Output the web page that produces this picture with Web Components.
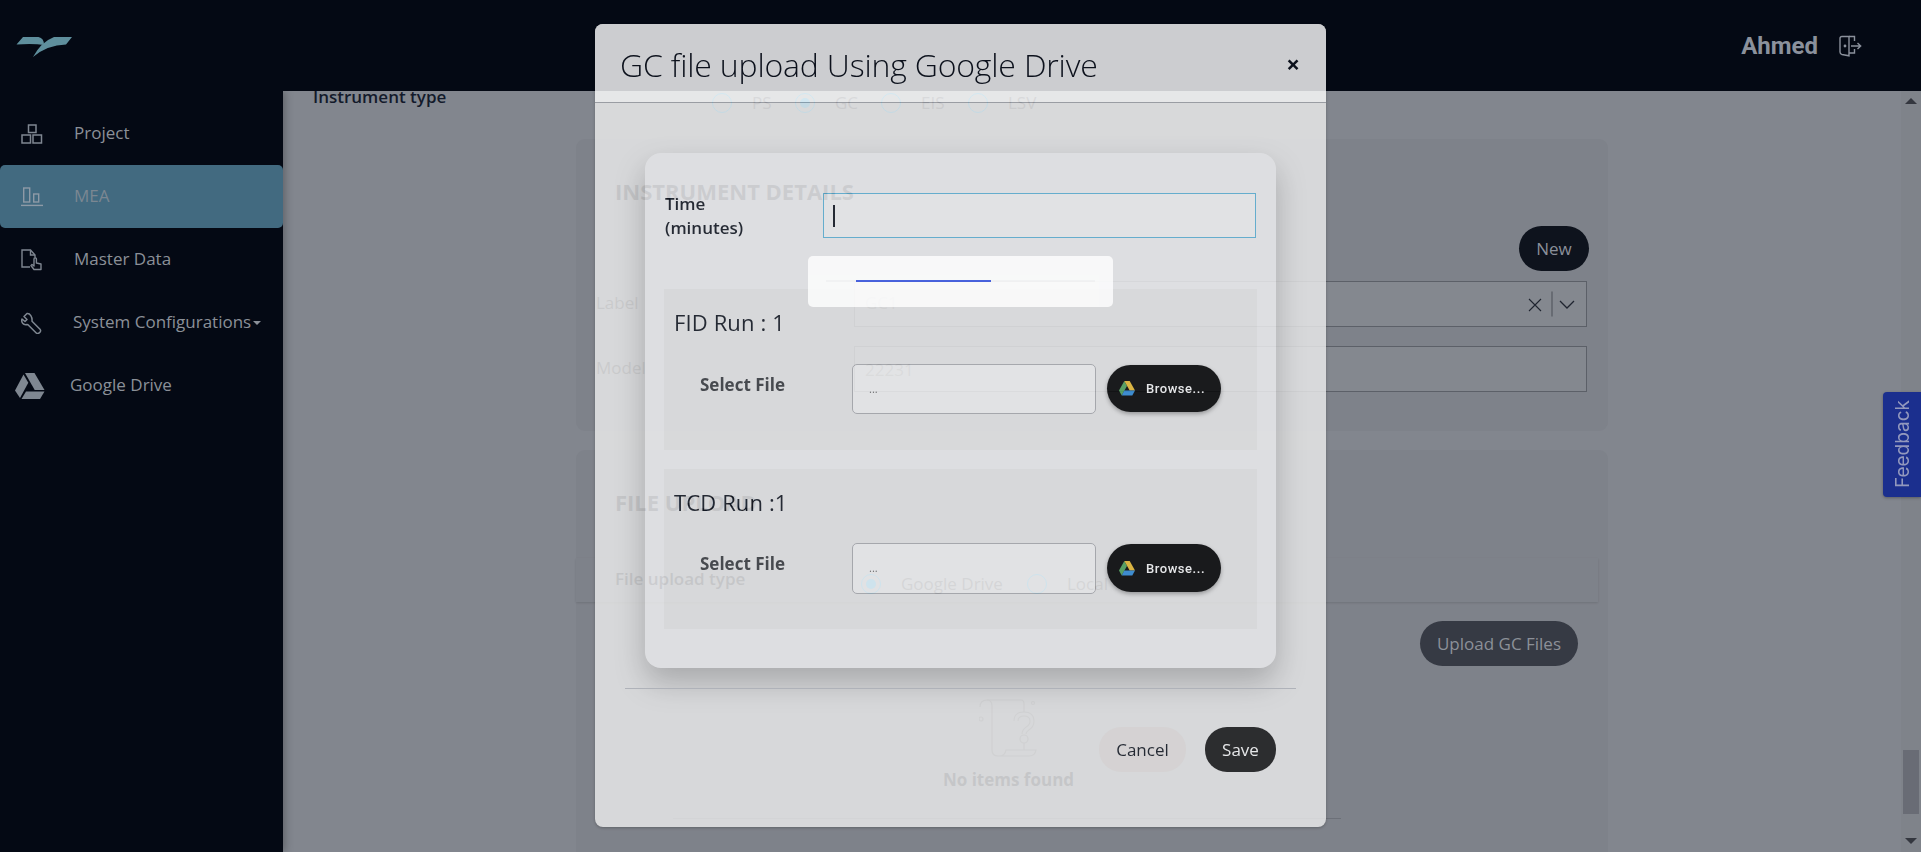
<!DOCTYPE html>
<html>
<head>
<meta charset="utf-8">
<title>GC file upload</title>
<style>
  html, body { margin:0; height:100%; overflow:hidden; background:#82868e; font-family:'Open Sans',sans-serif; }
</style>
</head>
<body>
<app-shell>
  <top-bar slot="top" user="Ahmed"></top-bar>
  <side-nav slot="side">
    <nav-item label="Project">
      <svg slot="icon" width="22" height="20" viewBox="0 0 22 20" fill="none" stroke="currentColor" stroke-width="1.5"><rect x="7.5" y="1" width="7.5" height="7.5"/><rect x="1" y="11" width="8.5" height="8"/><rect x="12" y="11" width="8.5" height="8"/></svg>
    </nav-item>
    <nav-item label="MEA" active>
      <svg slot="icon" width="22" height="20" viewBox="0 0 22 20" fill="none" stroke="currentColor" stroke-width="1.4"><rect x="2.7" y="1" width="6" height="14"/><rect x="12.7" y="7" width="5" height="8"/><path d="M0 18.4h22"/></svg>
    </nav-item>
    <nav-item label="Master Data">
      <svg slot="icon" width="22" height="22" viewBox="0 0 22 22" fill="none" stroke="currentColor" stroke-width="1.4"><path d="M9 18H1V1h8.5l4.5 5v2"/><path d="M9.5 1.5V6h4.5" /><path d="M13 20.5l-3-4 1-1 2 1.5V10a1.2 1.2 0 0 1 2.4 0v4l4.6 1v5.5z" stroke-linejoin="round"/></svg>
    </nav-item>
    <nav-item label="System Configurations" caret style="--label-x:73px">
      <svg slot="icon" width="22" height="22" viewBox="0 0 22 22" fill="none" stroke="currentColor" stroke-width="1.5" stroke-linejoin="round"><path d="M6 1.5L3 4.5l3 3-2 2L1 7C0 10 2 13.5 6 12.5l1 .2 8 8c1 1 2.2 1 3.5 0s1.500-2.500.5-3.500l-8-8C11.500 5 9 1 6 1.500z"/></svg>
    </nav-item>
    <nav-item label="Google Drive" style="--label-x:70px;--icon-x:15px">
      <svg slot="icon" width="30" height="26" viewBox="0 0 30 26" fill="currentColor"><path d="M10 0h9.500l10 17h-9.800z"/><path d="M8.500 1.500l4.800 8.300L5 25 0 17.500z"/><path d="M11 18.500h18.500L25 26H6.500z"/></svg>
    </nav-item>
  </side-nav>
  <mea-page slot="main"></mea-page>
  <fake-scrollbar slot="scroll"></fake-scrollbar>
</app-shell>

<feedback-tab>Feedback</feedback-tab>

<upload-modal heading="GC file upload Using Google Drive">
  <run-panel heading="FID Run : 1"></run-panel>
  <run-panel heading="TCD Run :1" style="--row-gap:25px;--field-h:51px;--browse-h:48px;--panel-h:160px;margin-top:19px"></run-panel>
</upload-modal>

<progress-box></progress-box>

<script>
  const DRIVE_ICON = `<svg width="16" height="15" viewBox="0 0 16 15"><path d="M5.300 0L0 9.500l2.700 5L8 5z" fill="#4ea75a"/><path d="M5.300 0h5.400L16 9.500h-5.300z" fill="#f0c030"/><path d="M2.700 14.500h10.600L16 9.500H5.300z" fill="#2f8fe0"/></svg>`;

  class AppShell extends HTMLElement {
    connectedCallback() {
      this.attachShadow({ mode: 'open' }).innerHTML = `
        <style>
          :host { display:grid; grid-template-columns:283px 1fr 20px; grid-template-rows:91px 761px; width:1921px; height:852px; overflow:hidden; }
          ::slotted([slot=top]) { grid-column:1 / -1; grid-row:1; }
          ::slotted([slot=side]) { grid-column:1; grid-row:2; z-index:1; }
          ::slotted([slot=main]) { grid-column:2; grid-row:2; }
          ::slotted([slot=scroll]) { grid-column:3; grid-row:2; }
        </style>
        <slot name="top"></slot><slot name="side"></slot><slot name="main"></slot><slot name="scroll"></slot>`;
    }
  }

  class TopBar extends HTMLElement {
    connectedCallback() {
      this.attachShadow({ mode: 'open' }).innerHTML = `
        <style>
          :host { display:flex; align-items:center; justify-content:space-between; background:#040914; position:relative; z-index:2; }
          .logo { margin-left:16px; margin-top:3px; display:block; }
          .user { display:flex; align-items:center; gap:21px; margin-right:59px; color:#8b919c; }
          .name { font:700 24px Roboto,sans-serif; }
        </style>
        <svg class="logo" width="57" height="22" viewBox="0 0 57 22" fill="#5f8f9d"><path d="M0.500 8.500L7 1h15.500q5.500 1 5.500 8Q18 7.500 0.500 8.500z"/><path d="M17 21q8-15 21-20h18l-6 7.500Q31 9 17 21z"/></svg>
        <div class="user">
          <span class="name">${this.getAttribute('user')}</span>
          <svg width="23" height="22" viewBox="0 0 23 22" fill="none" stroke="currentColor" stroke-width="1.4"><path d="M10 1.500H3Q1 1.500 1 3.500V17Q1 19 3 19.500L10 20.800z"/><path d="M10 1.500h5.500V6M10 18h5.500v-4"/><path d="M12 11h9.500M18.500 8l3.200 3-3.200 3"/><circle cx="6" cy="11" r=".7"/></svg>
        </div>`;
    }
  }

  class SideNav extends HTMLElement {
    connectedCallback() {
      this.attachShadow({ mode: 'open' }).innerHTML = `
        <style>:host { display:block; background:#040914; padding-top:11px; box-shadow:2px 0 8px rgba(0,0,0,.28); }</style>
        <slot></slot>`;
    }
  }

  class NavItem extends HTMLElement {
    connectedCallback() {
      const caret = this.hasAttribute('caret') ? '<i class="caret"></i>' : '';
      this.attachShadow({ mode: 'open' }).innerHTML = `
        <style>
          :host { display:flex; align-items:center; height:63px; color:#8b9098; font-size:17px; position:relative; }
          :host([active]) { background:#426a80; border-radius:5px; color:#7b8792; }
          .icon { width:var(--label-x, 74px); padding-left:var(--icon-x, 21px); box-sizing:border-box; display:flex; flex:none; color:#7f8791; }
          :host([active]) .icon { color:#8e9aa6; }
          .text { margin-top:-2px; }
          .caret { border:4px solid transparent; border-top-color:currentColor; border-bottom:0; margin-left:2px; margin-top:1px; }
        </style>
        <span class="icon"><slot name="icon"></slot></span><span class="text">${this.getAttribute('label')}</span>${caret}`;
    }
  }

  class RadioOpt extends HTMLElement {
    connectedCallback() {
      this.attachShadow({ mode: 'open' }).innerHTML = `
        <style>
          :host { display:inline-flex; align-items:center; gap:20px; font-size:17px; color:#3e424a; }
          .r { width:20px; height:20px; border:1px solid #1f86b8; border-radius:50%; box-sizing:border-box; display:flex; align-items:center; justify-content:center; flex:none; }
          :host([checked]) .r::after { content:''; width:10px; height:10px; border-radius:50%; background:#1f86b8; }
        </style>
        <span class="r"></span><slot></slot>`;
    }
  }

  class MeaPage extends HTMLElement {
    connectedCallback() {
      this.attachShadow({ mode: 'open' }).innerHTML = `
        <style>
          :host { display:block; overflow:hidden; position:relative; color:#131a2b; font-size:17px; }
          .type { display:flex; align-items:center; height:24px; margin:-7px 0 0 30px; font-weight:600; }
          .type .opts { display:flex; position:absolute; left:429px; top:0; font-weight:400; }
          .panel { margin:0 0 19px 293px; width:1032px; background:#7e828a; border-radius:9px; box-sizing:border-box; position:relative; }
          .p1 { height:292px; margin-top:31px; padding:37px 19px 0 39px; }
          .p2 { height:500px; padding:37px 10px 0 39px; }
          h2 { margin:0; font-size:22px; font-weight:700; line-height:30px; color:#232834; text-transform:uppercase; }
          .btn { background:#0e131d; color:#8a8f9a; border-radius:23px; height:45px; display:flex; align-items:center; justify-content:center; }
          .new { width:70px; margin:20px 0 10px auto; padding-bottom:1px; box-sizing:border-box; }
          .row { display:flex; align-items:center; margin-left:-19px; margin-bottom:19px; color:#3a3e46; }
          .row label { width:258px; flex:none; margin-top:-4px; }
          .row .box { flex:1; margin-right:2px; height:46px; box-sizing:border-box; border:1px solid #5c6068; background:#84888f; display:flex; align-items:center; padding-left:10px; color:#5a5e66; position:relative; }
          .row .box.sel { padding-bottom:4px; }
          .tools { position:absolute; right:10px; top:9px; display:flex; align-items:center; }
          .type-row { margin:41px 0 19px -39px; height:44px; box-sizing:border-box; padding:0 0 3px 39px; display:flex; align-items:center; box-shadow:0 1px 2px rgba(0,0,0,.12); font-weight:600; color:#232834; }
          .type-row .opts { position:absolute; left:285px; top:122px; display:flex; font-weight:400; }
          .upload { width:158px; margin:0 20px 0 auto; background:#363a44; color:#8c9098; padding-bottom:1px; box-sizing:border-box; }
          .empty { margin:32px 0 0 -39px; display:flex; flex-direction:column; align-items:center; width:865px; color:#232834; font-weight:700; }
          .empty div { margin-top:10px; line-height:24px; }
          .rule { position:absolute; left:97px; width:668px; top:368px; border-top:1px solid #6c7078; }
        </style>
        <div class="type">Instrument type
          <div class="opts">
            <radio-opt style="width:83px">PS</radio-opt><radio-opt checked style="width:86px">GC</radio-opt><radio-opt style="width:87px">EIS</radio-opt><radio-opt>LSV</radio-opt>
          </div>
        </div>
        <section class="panel p1">
          <h2>Instrument details</h2>
          <div class="btn new">New</div>
          <div class="row"><label>Label</label>
            <div class="box sel">GC1
              <div class="tools">
                <svg width="48" height="26" viewBox="0 0 48 26" fill="none" stroke="#1f2430" stroke-width="1.1"><path d="M1 8l12 12M13 8L1 20"/><path d="M24 .5v25" stroke="#50545c"/><path d="M32 10l7 7 7-7" stroke-width="1.300"/></svg>
              </div>
            </div>
          </div>
          <div class="row"><label>Model</label><div class="box">22231</div></div>
        </section>
        <section class="panel p2">
          <h2>File upload</h2>
          <div class="type-row">File upload type
            <div class="opts"><radio-opt checked style="width:166px">Google Drive</radio-opt><radio-opt>Local</radio-opt></div>
          </div>
          <div class="btn upload">Upload GC Files</div>
          <div class="empty">
            <svg width="60" height="60" viewBox="0 0 60 60" fill="none" stroke="#5a5e66" stroke-width="1.2">
              <path d="M1 9Q1 2 8 2H42Q45 2 45 6V14"/>
              <path d="M8 2Q13 2 13 8V52Q13 58 19 58H50Q56 58 57 52H27Q26 58 20 58"/>
              <path d="M37 23q0-7 8-7t8 7q0 5-4.500 7.500Q45 33 45 36" stroke-width="5"/>
              <path d="M37 23q0-7 8-7t8 7q0 5-4.500 7.500Q45 33 45 36" stroke-width="3" stroke="#7e828a"/>
              <circle cx="45" cy="41" r="4"/><path d="M45 45v7"/>
              <circle cx="2" cy="21" r="2"/><circle cx="54" cy="5" r="1.500"/>
            </svg>
            <div>No items found</div>
          </div>
          <div class="rule"></div>
        </section>`;
    }
  }

  class FakeScrollbar extends HTMLElement {
    connectedCallback() {
      this.attachShadow({ mode: 'open' }).innerHTML = `
        <style>
          :host { display:flex; flex-direction:column; align-items:center; background:#7f838a; position:relative; }
          .up, .down { border:6px solid transparent; width:0; height:0; }
          .up { border-bottom:6px solid #34373f; border-top:0; margin-top:7px; }
          .spacer { flex:1; }
          .thumb { width:16px; height:64px; background:#696c75; margin-bottom:24px; }
          .down { border-top:6px solid #34373f; border-bottom:0; margin-bottom:8px; }
        </style>
        <i class="up"></i><div class="spacer"></div><div class="thumb"></div><i class="down"></i>`;
    }
  }

  class FeedbackTab extends HTMLElement {
    connectedCallback() {
      this.attachShadow({ mode: 'open' }).innerHTML = `
        <style>
          :host { position:fixed; right:0; top:392px; width:38px; height:105px; background:#1b2f8e; color:#9298bd; border-radius:4px 0 0 4px; display:flex; align-items:center; justify-content:center; font:400 19px Inter,sans-serif; box-shadow:0 1px 3px rgba(0,0,0,.3); z-index:3; }
          span { writing-mode:vertical-rl; transform:rotate(180deg); }
        </style>
        <span><slot></slot></span>`;
    }
  }

  class UploadModal extends HTMLElement {
    connectedCallback() {
      this.attachShadow({ mode: 'open' }).innerHTML = `
        <style>
          :host { position:fixed; left:595px; top:24px; width:731px; height:803px; opacity:.8; border-radius:8px; background:#eeeeee; display:flex; flex-direction:column; z-index:4; color:#10151f; box-shadow:0 1px 3px rgba(0,0,0,.3); overflow:hidden; font-size:17px; }
          header { height:79px; flex:none; box-sizing:border-box; background:#fff; border-bottom:1px solid #a0a3a9; display:flex; align-items:center; justify-content:space-between; padding:0 26px 0 25px; }
          h1 { margin:0; font-size:32px; font-weight:300; line-height:44px; margin-top:3px; letter-spacing:-.18px; }
          .close { font-size:24px; font-weight:700; margin-top:1px; }
          .card { margin:50px 50px 0; height:515px; box-sizing:border-box; background:#f6f6f7; border-radius:16px; box-shadow:0 14px 30px rgba(0,0,0,.25); padding:40px 19px 0; }
          .time { display:flex; height:45px; margin-bottom:51px; }
          .time label { width:159px; padding-left:1px; box-sizing:border-box; font-weight:600; line-height:24px; margin-top:-1px; flex:none; }
          .time .field { flex:1; margin-right:1px; box-sizing:border-box; border:1px solid #5fb8de; background:#fafafb; display:flex; align-items:center; padding-left:9px; }
          .time .field i { width:2px; height:22px; background:#10151f; }
          hr { margin:20px 30px 0; border:0; border-top:1px solid #bcbfc5; }
          footer { display:flex; justify-content:flex-end; gap:19px; padding:38px 50px 0 0; }
          button { all:unset; height:45px; border-radius:22px; display:flex; align-items:center; justify-content:center; font-size:17px; box-sizing:border-box; }
          .cancel { width:87px; background:#ebe7e5; color:#10151f; }
          .save { width:71px; background:#181818; color:#fff; }
        </style>
        <header><h1>${this.getAttribute('heading')}</h1><span class="close">×</span></header>
        <div class="card">
          <div class="time"><label>Time<br>(minutes)</label><div class="field"><i></i></div></div>
          <slot></slot>
        </div>
        <hr>
        <footer><button class="cancel">Cancel</button><button class="save">Save</button></footer>`;
    }
  }

  class RunPanel extends HTMLElement {
    connectedCallback() {
      this.attachShadow({ mode: 'open' }).innerHTML = `
        <style>
          :host { display:block; height:var(--panel-h, 161px); background:#eeeeee; padding-top:18px; box-sizing:border-box; }
          h3 { margin:0 0 calc(var(--row-gap, 26px) + 1px) 10px; font-size:22px; font-weight:500; line-height:30px; letter-spacing:.12px; }
          .row { display:flex; align-items:flex-start; }
          label { width:152px; margin:9px 0 0 36px; font-weight:700; line-height:24px; color:#3a3c40; flex:none; }
          .file { width:244px; height:var(--field-h, 50px); box-sizing:border-box; border:1px solid #b0b1b5; border-radius:5px; background:#fafafb; padding:14px 0 0 16px; font-size:11px; line-height:20px; color:#707070; }
          drive-button { margin:1px 0 0 11px; }
        </style>
        <h3>${this.getAttribute('heading')}</h3>
        <div class="row"><label>Select File</label><div class="file">...</div><drive-button></drive-button></div>`;
    }
  }

  class DriveButton extends HTMLElement {
    connectedCallback() {
      this.attachShadow({ mode: 'open' }).innerHTML = `
        <style>
          :host { display:flex; align-items:center; gap:11px; width:114px; height:var(--browse-h, 47px); box-sizing:border-box; padding-left:12px; background:#000; border-radius:24px; color:#fff; font:500 13px Roboto,sans-serif; letter-spacing:.55px; box-shadow:0 2px 4px rgba(0,0,0,.35); }
          svg { display:block; flex:none; }
        </style>
        ${DRIVE_ICON}<span>Browse...</span>`;
    }
  }

  class ProgressBox extends HTMLElement {
    connectedCallback() {
      this.attachShadow({ mode: 'open' }).innerHTML = `
        <style>
          :host { position:fixed; left:808px; top:256px; width:305px; height:51px; background:#fff; opacity:.8; border-radius:5px; z-index:5; padding:24px 18px 0; box-sizing:border-box; }
          .track { height:2px; background:#f7f7f7; }
          .bar { height:2px; width:135px; margin-left:30px; background:#2544dc; }
        </style>
        <div class="track"><div class="bar"></div></div>`;
    }
  }

  customElements.define('app-shell', AppShell);
  customElements.define('top-bar', TopBar);
  customElements.define('side-nav', SideNav);
  customElements.define('nav-item', NavItem);
  customElements.define('radio-opt', RadioOpt);
  customElements.define('mea-page', MeaPage);
  customElements.define('fake-scrollbar', FakeScrollbar);
  customElements.define('feedback-tab', FeedbackTab);
  customElements.define('upload-modal', UploadModal);
  customElements.define('run-panel', RunPanel);
  customElements.define('drive-button', DriveButton);
  customElements.define('progress-box', ProgressBox);
</script>
</body>
</html>
